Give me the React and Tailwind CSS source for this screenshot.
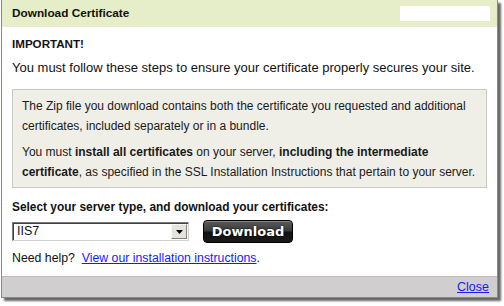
export default function App() {
  return (
    <div className="w-[504px] h-[306px] bg-white relative" style={{ fontFamily: '"Liberation Sans", Arial, sans-serif' }}>
      <div className="absolute left-[1px] top-0 w-[497px] h-[298px] shadow-[3px_3px_2px_rgba(0,0,0,0.6)]" />
      <div className="relative ml-[1px] w-[497px] h-[298px] border border-[#8a8a8a] border-t-0 flex flex-col bg-white text-[12px] text-[#111] overflow-hidden">
        <div className="shrink-0 h-[27px] bg-[#e5eec8] flex items-center justify-between pl-[10px] pr-[7px]">
          <span className="font-bold text-[11.8px]">Download Certificate</span>
          <div className="w-[90px] h-[15px] bg-white" />
        </div>
        <div className="flex-1 min-h-0 px-[10px] pt-[9px]">
          <div className="font-bold text-[11.6px] leading-[16px]">IMPORTANT!</div>
          <div className="mt-[8px] leading-[15px] text-[13px]">You must follow these steps to ensure your certificate properly secures your site.</div>
          <div className="mt-[14px] bg-[#efeee7] border border-[#c9c9c2] pl-[9px] pr-[4px] pt-[6px] pb-[5px] leading-[20px] text-[12px] text-[#1a1a1a]">
            <p>The Zip file you download contains both the certificate you requested and additional certificates, included separately or in a bundle.</p>
            <p className="mt-[6px]">You must <b>install all certificates</b> on your server, <b>including the intermediate certificate</b>, as specified in the SSL Installation Instructions that pertain to your server.</p>
          </div>
          <div className="mt-[12px] font-bold text-[11.9px] leading-[15px]">Select your server type, and download your certificates:</div>
          <div className="mt-[5px] flex items-center gap-[14px]">
            <div className="w-[177px] h-[19px] border border-[#7a7a7a] border-b-[#d0d0d0] border-r-[#d0d0d0] bg-white flex items-center shadow-[inset_1px_1px_0_#404040]">
              <span className="flex-1 pl-[4px] text-[12.5px]">IIS7</span>
              <div className="w-[16px] h-[15px] mr-[1px] bg-[#e4e3de] border border-[#f8f8f8] border-r-[#808080] border-b-[#808080] flex items-center justify-center">
                <svg width="7" height="4" viewBox="0 0 7 4"><path d="M0 0h7L3.5 4z" fill="#000" /></svg>
              </div>
            </div>
            <button className="w-[90px] h-[23px] rounded-[4px] border border-black bg-[linear-gradient(#5a5a5a_0%,#3a3a3a_48%,#111_52%,#1a1a1a_100%)] text-white font-bold text-[13px] leading-none [text-shadow:0_0_2px_#000] shadow-[inset_0_1px_0_rgba(255,255,255,0.25)]" style={{ fontFamily: '"DejaVu Sans", Verdana, sans-serif' }}>
              Download
            </button>
          </div>
          <div className="mt-[8px] leading-[15px] text-[12.3px]">
            Need help?&nbsp; <a className="text-[#1a1aee] underline">View our installation instructions</a>.
          </div>
        </div>
        <div className="shrink-0 h-[21px] bg-[#d0cece] border-t border-[#bdbbbb] flex items-center justify-end pr-[8px]">
          <a className="text-[#1a1aee] underline text-[12.5px]">Close</a>
        </div>
      </div>
    </div>
  );
}
